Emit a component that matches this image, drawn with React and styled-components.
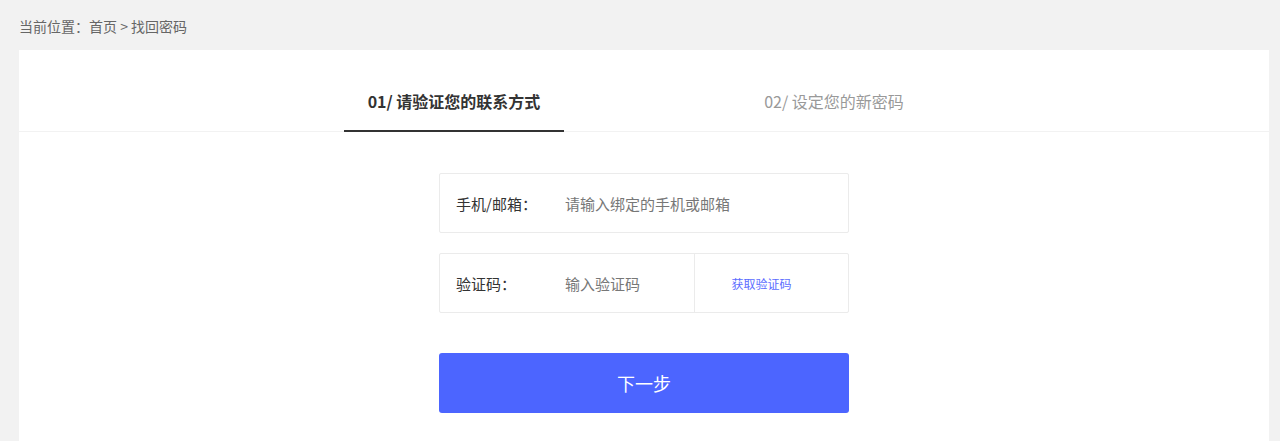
import React from "react";
import styled, { createGlobalStyle } from "styled-components";

// STYLES
const GlobalStyle = createGlobalStyle`
  html, body {
    margin: 0;
    padding: 0;
    background: #f2f2f2;
    font-family: "Noto Sans CJK SC", "Noto Sans", sans-serif;
  }
`;

const Page = styled.div`
  padding: 0 11px 0 19px;
`;

const Crumbs = styled.div`
  height: 50px;
  line-height: 52px;
  font-size: 14px;
  color: #666;
`;

const Panel = styled.div`
  background: #fff;
  min-height: 400px;
`;

const Tabs = styled.div`
  display: flex;
  justify-content: center;
  gap: 160px;
  border-bottom: 1px solid #f2f2f2;
`;

const Tab = styled.div`
  width: 220px;
  height: 82px;
  padding-top: 40px;
  line-height: 22px;
  text-align: center;
  font-size: 16px;
  font-weight: ${(p) => (p.active ? 700 : 400)};
  color: ${(p) => (p.active ? "#333" : "#999")};
  border-bottom: 2px solid ${(p) => (p.active ? "#333" : "transparent")};
  box-sizing: border-box;
  margin-bottom: -1px;
`;

const Form = styled.div`
  width: 410px;
  margin: 0 auto;
  padding-top: 41px;
  display: flex;
  flex-direction: column;
  gap: 20px;
`;

const Field = styled.div`
  display: flex;
  align-items: center;
  height: 60px;
  box-sizing: border-box;
  border: 1px solid #ebebeb;
  border-radius: 2px;
`;

const Label = styled.span`
  width: 125px;
  padding-left: 16px;
  flex-shrink: 0;
  box-sizing: border-box;
  font-size: 15px;
  color: #333;
`;

const Input = styled.input`
  flex: 1;
  min-width: 0;
  height: 100%;
  border: none;
  outline: none;
  padding: 0;
  font-family: inherit;
  font-size: 15px;
  color: #333;
  background: transparent;
  &::placeholder {
    color: #777;
  }
`;

const CodeBtn = styled.button`
  width: 154px;
  height: 100%;
  flex-shrink: 0;
  padding: 0 20px 0 0;
  border: none;
  border-left: 1px solid #ebebeb;
  background: transparent;
  font-family: inherit;
  font-size: 12px;
  color: #5b6cff;
  cursor: pointer;
`;

const NextBtn = styled.button`
  margin-top: 20px;
  height: 60px;
  border: none;
  border-radius: 3px;
  background: #4c65ff;
  color: #fff;
  font-family: inherit;
  font-size: 18px;
  cursor: pointer;
`;
// END STYLES

export default function App() {
  return (
    <>
      <GlobalStyle />
      <Page>
        <Crumbs>当前位置：首页 &gt; 找回密码</Crumbs>
        <Panel>
          <Tabs>
            <Tab active>01/ 请验证您的联系方式</Tab>
            <Tab>02/ 设定您的新密码</Tab>
          </Tabs>
          <Form>
            <Field>
              <Label>手机/邮箱：</Label>
              <Input placeholder="请输入绑定的手机或邮箱" />
            </Field>
            <Field>
              <Label>验证码：</Label>
              <Input placeholder="输入验证码" />
              <CodeBtn>获取验证码</CodeBtn>
            </Field>
            <NextBtn>下一步</NextBtn>
          </Form>
        </Panel>
      </Page>
    </>
  );
}
